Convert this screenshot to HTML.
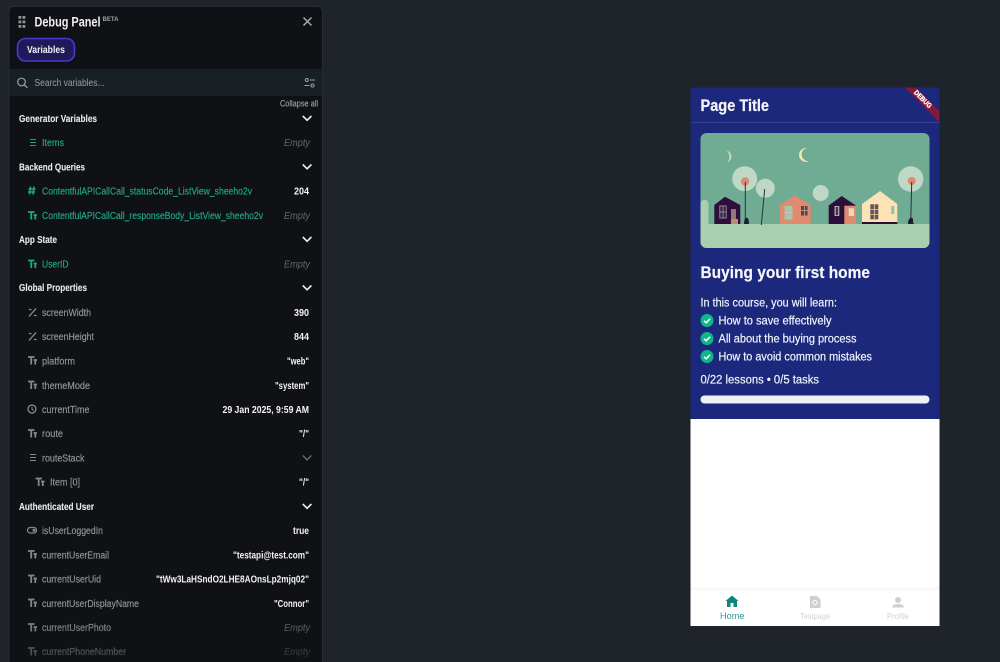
<!DOCTYPE html>
<html lang="en"><head><meta charset="utf-8"><title>Debug Panel</title>
<style>
html,body{margin:0;padding:0;background:#1e2429;width:1000px;height:662px;overflow:hidden}
svg{display:block;filter:blur(.3px)}
text{font-family:"Liberation Sans",sans-serif;dominant-baseline:alphabetic}
.s{font-size:10px;font-weight:700;fill:#e6e8ea;stroke:#e6e8ea;stroke-width:.1px}
.t{font-size:10px;fill:#22a889;stroke:#22a889;stroke-width:.15px}
.g{font-size:10px;fill:#92979b;stroke:#92979b;stroke-width:.15px}
.v{font-size:10px;font-weight:700;fill:#f2f2f2}
.e{font-size:10px;font-style:italic;fill:#5e6266;stroke:#5e6266;stroke-width:.1px}
.b{font-size:11.5px;fill:#f0f2fa;stroke:#f0f2fa;stroke-width:.2px}
</style></head><body>
<svg width="1000" height="662" viewBox="0 0 1000 662" xmlns="http://www.w3.org/2000/svg">
<rect width="1000" height="662" fill="#1e2429"/>
<!-- panel -->
<rect x="9" y="6.500" width="313.500" height="670" rx="5" fill="#0f1114" stroke="#262c31" stroke-width="1"/>
<g fill="#8f9499"><rect x="18.500" y="16" width="2.800" height="2.800"/><rect x="22.500" y="16" width="2.800" height="2.800"/><rect x="18.500" y="20.500" width="2.800" height="2.800"/><rect x="22.500" y="20.500" width="2.800" height="2.800"/><rect x="18.500" y="25" width="2.800" height="2.800"/><rect x="22.500" y="25" width="2.800" height="2.800"/></g>
<text x="34.500" y="26.500" font-size="13.500" font-weight="700" fill="#f1f1f1" textLength="66" lengthAdjust="spacingAndGlyphs">Debug Panel</text>
<text x="102.500" y="21" font-size="6" font-weight="700" fill="#9ea2a6" textLength="16" lengthAdjust="spacingAndGlyphs">BETA</text>
<path d="M303.500 17.500l8 8M311.500 17.500l-8 8" stroke="#a6aaae" stroke-width="1.500" fill="none"/>
<rect x="17.500" y="38.500" width="57" height="22.500" rx="8" fill="#1f1a58" stroke="#4a38d0" stroke-width="1.600"/>
<text x="27" y="52.800" font-size="10" font-weight="700" fill="#f2f2f8" textLength="38" lengthAdjust="spacingAndGlyphs">Variables</text>
<rect x="9.500" y="69" width="312.500" height="27" fill="#192025"/>
<circle cx="21.500" cy="82" r="3.800" fill="none" stroke="#9ca1a5" stroke-width="1.200"/><path d="M24.300 84.800l3 3" stroke="#9ca1a5" stroke-width="1.300"/>
<text x="34.500" y="85.800" font-size="10" fill="#8f9498" stroke="#8f9498" stroke-width=".1" textLength="70" lengthAdjust="spacingAndGlyphs">Search variables...</text>
<g fill="none" stroke="#9ca1a5" stroke-width="1"><circle cx="306.800" cy="80" r="1.500"/><path d="M310 80h5"/><circle cx="312.500" cy="85.500" r="1.500"/><path d="M304.500 85.500h5"/></g>
<text x="280" y="106.300" font-size="9" fill="#a3a7ab" stroke="#a3a7ab" stroke-width=".1" textLength="38" lengthAdjust="spacingAndGlyphs">Collapse all</text>

<!-- sections -->
<text class="s" x="19" y="121.800" textLength="78" lengthAdjust="spacingAndGlyphs">Generator Variables</text>
<text class="s" x="19" y="170.300" textLength="66" lengthAdjust="spacingAndGlyphs">Backend Queries</text>
<text class="s" x="19" y="242.800" textLength="38" lengthAdjust="spacingAndGlyphs">App State</text>
<text class="s" x="19" y="290.800" textLength="68" lengthAdjust="spacingAndGlyphs">Global Properties</text>
<text class="s" x="19" y="509.800" textLength="75" lengthAdjust="spacingAndGlyphs">Authenticated User</text>
<g fill="none" stroke="#f0f0f0" stroke-width="1.600">
<path d="M302.800 116l4.300 4.300 4.300-4.300"/><path d="M302.800 164.500l4.300 4.300 4.300-4.300"/><path d="M302.800 237l4.300 4.300 4.300-4.300"/><path d="M302.800 285.500l4.300 4.300 4.300-4.300"/><path d="M302.800 504l4.300 4.300 4.300-4.300"/>
</g>
<path d="M302.800 455.500l4.300 4.300 4.300-4.300" fill="none" stroke="#6d7175" stroke-width="1.300"/>

<!-- teal rows -->
<path d="M30 139.500h6M30 142.500h6M30 145.500h6" stroke="#1f9f82" stroke-width="1.100"/>
<text class="t" x="42" y="145.800" textLength="22" lengthAdjust="spacingAndGlyphs">Items</text>
<text class="e" x="284" y="146" textLength="26" lengthAdjust="spacingAndGlyphs">Empty</text>
<path d="M30.500 186.500l-1 8M34 186.500l-1 8M28.500 189h7M28 192h7" stroke="#1fa585" stroke-width="1.600" fill="none"/>
<text class="t" x="42" y="194.300" textLength="210" lengthAdjust="spacingAndGlyphs">ContentfulAPICallCall_statusCode_ListView_sheeho2v</text>
<text class="v" x="294" y="194.500" textLength="15" lengthAdjust="spacingAndGlyphs">204</text>
<path d="M28 212h6.500M31.200 212v7.500M33.500 215h3.500M35.300 215v4.500" stroke="#1fa585" stroke-width="1.800" fill="none"/>
<text class="t" x="42" y="218.800" textLength="221" lengthAdjust="spacingAndGlyphs">ContentfulAPICallCall_responseBody_ListView_sheeho2v</text>
<text class="e" x="284" y="219" textLength="26" lengthAdjust="spacingAndGlyphs">Empty</text>
<path d="M28 260.500h6.500M31.200 260.500v7.500M33.500 263.500h3.500M35.300 263.500v4.500" stroke="#1fa585" stroke-width="1.800" fill="none"/>
<text class="t" x="42" y="267.300" textLength="26.500" lengthAdjust="spacingAndGlyphs">UserID</text>
<text class="e" x="284" y="267.500" textLength="26" lengthAdjust="spacingAndGlyphs">Empty</text>

<!-- global -->
<g fill="none" stroke="#8e9296" stroke-width="1.300">
<path d="M29 316.500l7-8"/><path d="M29 340.500l7-8"/>
<path d="M29 309.500h2.500M34 315.500h2.500M29 333.500h2.500M34 339.500h2.500"/>
</g>
<g fill="none" stroke="#85898d" stroke-width="1.800">
<path d="M28 357h6.500M31.200 357v7.500M33.500 360h3.500M35.300 360v4.500"/>
<path d="M28 381.500h6.500M31.200 381.500v7.500M33.500 384.500h3.500M35.300 384.500v4.500"/>
<path d="M28 430h6.500M31.200 430v7.500M33.500 433h3.500M35.300 433v4.500"/>
<path d="M35.500 478.500h6.500M38.700 478.500v7.500M41 481.500h3.500M42.800 481.500v4.500"/>
<path d="M28 551h6.500M31.200 551v7.500M33.500 554h3.500M35.300 554v4.500"/>
<path d="M28 575.500h6.500M31.200 575.500v7.500M33.500 578.500h3.500M35.300 578.500v4.500"/>
<path d="M28 599.500h6.500M31.200 599.500v7.500M33.500 602.500h3.500M35.300 602.500v4.500"/>
<path d="M28 624h6.500M31.200 624v7.500M33.500 627h3.500M35.300 627v4.500"/>
<path d="M28 648h6.500M31.200 648v7.500M33.500 651h3.500M35.300 651v4.500"/>
</g>
<circle cx="32" cy="409" r="4" fill="none" stroke="#8e9296" stroke-width="1.200"/><path d="M32 406.800v2.500l1.800 1" fill="none" stroke="#8e9296" stroke-width=".9"/>
<path d="M30 454.500h6M30 457.500h6M30 460.500h6" stroke="#85898d" stroke-width="1"/>
<rect x="27.500" y="527.500" width="9" height="5.500" rx="2.700" fill="none" stroke="#85898d" stroke-width="1.200"/><circle cx="34" cy="530.200" r="1.500" fill="#85898d"/>

<text class="g" x="42" y="315.800" textLength="49" lengthAdjust="spacingAndGlyphs">screenWidth</text>
<text class="v" x="294" y="315.800" textLength="15" lengthAdjust="spacingAndGlyphs">390</text>
<text class="g" x="42" y="339.800" textLength="52" lengthAdjust="spacingAndGlyphs">screenHeight</text>
<text class="v" x="294" y="340.200" textLength="15" lengthAdjust="spacingAndGlyphs">844</text>
<text class="g" x="42" y="364.300" textLength="33" lengthAdjust="spacingAndGlyphs">platform</text>
<text class="v" x="287" y="364.300" textLength="22" lengthAdjust="spacingAndGlyphs">"web"</text>
<text class="g" x="42" y="388.800" textLength="48" lengthAdjust="spacingAndGlyphs">themeMode</text>
<text class="v" x="275" y="388.800" textLength="34" lengthAdjust="spacingAndGlyphs">"system"</text>
<text class="g" x="42" y="412.800" textLength="47.500" lengthAdjust="spacingAndGlyphs">currentTime</text>
<text class="v" x="222.500" y="412.800" textLength="86.500" lengthAdjust="spacingAndGlyphs">29 Jan 2025, 9:59 AM</text>
<text class="g" x="42" y="436.800" textLength="21" lengthAdjust="spacingAndGlyphs">route</text>
<text class="v" x="299" y="437" textLength="10" lengthAdjust="spacingAndGlyphs">"/"</text>
<text class="g" x="42" y="461.300" textLength="42.500" lengthAdjust="spacingAndGlyphs">routeStack</text>
<text class="g" x="50" y="485.300" textLength="30" lengthAdjust="spacingAndGlyphs">Item [0]</text>
<text class="v" x="299" y="485.300" textLength="10" lengthAdjust="spacingAndGlyphs">"/"</text>
<text class="g" x="42" y="533.800" textLength="61" lengthAdjust="spacingAndGlyphs">isUserLoggedIn</text>
<text class="v" x="293" y="534" textLength="16" lengthAdjust="spacingAndGlyphs">true</text>
<text class="g" x="42" y="558.300" textLength="67" lengthAdjust="spacingAndGlyphs">currentUserEmail</text>
<text class="v" x="233" y="558.300" textLength="76" lengthAdjust="spacingAndGlyphs">"testapi@test.com"</text>
<text class="g" x="42" y="582.300" textLength="59" lengthAdjust="spacingAndGlyphs">currentUserUid</text>
<text class="v" x="156" y="582.300" textLength="153" lengthAdjust="spacingAndGlyphs">"tWw3LaHSndO2LHE8AOnsLp2mjq02"</text>
<text class="g" x="42" y="606.800" textLength="97" lengthAdjust="spacingAndGlyphs">currentUserDisplayName</text>
<text class="v" x="274" y="606.800" textLength="35" lengthAdjust="spacingAndGlyphs">"Connor"</text>
<text class="g" x="42" y="630.800" textLength="69" lengthAdjust="spacingAndGlyphs">currentUserPhoto</text>
<text class="e" x="284" y="631" textLength="26" lengthAdjust="spacingAndGlyphs">Empty</text>
<text class="g" x="42" y="654.800" textLength="84" lengthAdjust="spacingAndGlyphs">currentPhoneNumber</text>
<text class="e" x="284" y="655" textLength="26" lengthAdjust="spacingAndGlyphs">Empty</text>
<linearGradient id="f" x1="0" y1="0" x2="0" y2="1"><stop offset="0" stop-color="#0f1114" stop-opacity="0"/><stop offset="1" stop-color="#0f1114" stop-opacity=".65"/></linearGradient>
<rect x="10" y="620" width="312" height="42" fill="url(#f)"/>

<!-- phone -->
<rect x="690.500" y="87.500" width="249" height="538.500" fill="#fff"/>
<rect x="690.500" y="87.500" width="249" height="331.500" fill="#1c287c"/>
<rect x="690.500" y="122" width="249" height="1" fill="#35408c"/>
<polygon points="905,87.500 916,87.500 939.500,111 939.500,122.500" fill="#7d1a3e"/>
<text x="0" y="0" transform="translate(913.500,93) rotate(45)" font-size="7" font-weight="700" fill="#fff" stroke="#fff" stroke-width=".3" textLength="22" lengthAdjust="spacingAndGlyphs">DEBUG</text>
<text x="700.500" y="110.800" font-size="16.500" font-weight="700" fill="#f4f5fb" stroke="#f4f5fb" stroke-width=".2" textLength="68.500" lengthAdjust="spacingAndGlyphs">Page Title</text>

<!-- image -->
<clipPath id="c"><rect x="700.500" y="133" width="229" height="115" rx="6"/></clipPath>
<g clip-path="url(#c)">
<rect x="700" y="133" width="230" height="115" fill="#6fac93"/>
<path d="M700.500 224v-20q0-4 4-4t4 4v20z" fill="#a9cfb0"/>
<rect x="700" y="224" width="230" height="24" fill="#aacfae"/>
<!-- moons -->
<path d="M726.500 150.500A6.200 6.200 0 0 1 727 162.500A8 8 0 0 0 726.500 150.500z" fill="#cfdcb4"/>
<path d="M807 148A7 7 0 1 0 809.500 161A6.500 6.500 0 0 1 807 148z" fill="#f5e6b4"/>
<!-- trees -->
<circle cx="744.700" cy="178.700" r="12.500" fill="#bfd8c6"/>
<circle cx="765.300" cy="188.300" r="9.500" fill="#bfd8c6"/>
<circle cx="820.700" cy="193" r="8" fill="#bfd8c6"/>
<circle cx="910.700" cy="179" r="12.700" fill="#bfd8c6"/>
<circle cx="745" cy="181.500" r="4.200" fill="#dd8a72"/>
<circle cx="911.700" cy="181" r="4" fill="#dd8a72"/>
<path d="M745.300 182v42M764.700 189l-3.400 36M911.700 182l-1 41" stroke="#1f3440" stroke-width="1" fill="none"/>
<path d="M744 224q0-5 2-6t2.500 2 .5 4z" fill="#1a1f35"/>
<path d="M908 224q0-5 2.500-6t2.500 2 1 4z" fill="#1a1f35"/>
<!-- house 1 -->
<polygon points="714.300,224 714.300,205 725,196.700 740.300,205 740.300,224" fill="#2e0f3b"/>
<rect x="719.300" y="205.500" width="7.400" height="13" fill="#8a8c90"/><rect x="720.300" y="206.500" width="2.300" height="5" fill="#3c2048"/><rect x="723.500" y="206.500" width="2.300" height="5" fill="#3c2048"/><rect x="720.300" y="212.500" width="2.300" height="5" fill="#3c2048"/><rect x="723.500" y="212.500" width="2.300" height="5" fill="#3c2048"/>
<rect x="731" y="209" width="5" height="10" fill="#8f7a78"/><rect x="731" y="219" width="7" height="5" fill="#c08a74"/>
<!-- house 2 -->
<polygon points="780,224 780,205 795,195.300 810.700,205 810.700,224" fill="#e08a70"/>
<rect x="784.500" y="206" width="8" height="13.500" fill="#9fc8ae"/><rect x="784.500" y="212" width="8" height="1" fill="#e8b8a0"/>
<rect x="801" y="206" width="6.500" height="9.500" fill="#5a4050"/><rect x="804" y="206" width=".8" height="9.500" fill="#c9a590"/><rect x="801" y="210" width="6.500" height=".8" fill="#c9a590"/>
<!-- house 3 -->
<polygon points="828.700,224 828.700,205.500 841.700,196 856,205.500 856,224" fill="#2e0f3b"/>
<rect x="844.300" y="205.700" width="11.700" height="18.300" fill="#e08a70"/>
<rect x="834.500" y="206" width="4.800" height="10" fill="#a8b0a4"/><rect x="835.800" y="207" width="2.200" height="8" fill="#4a3050"/>
<rect x="848.700" y="208.300" width="5.300" height="7.700" fill="#ecd6bc"/>
<!-- house 4 -->
<polygon points="862,222 862,204 880,191 897.300,204 897.300,222" fill="#fbe3b5"/>
<rect x="862" y="222" width="35.300" height="2" fill="#26102f"/>
<rect x="870.300" y="204.300" width="8" height="15" fill="#6a5258"/>
<path d="M870.300 209.300h8M870.300 214.300h8M874.300 204.300v15" stroke="#fbe3b5" stroke-width=".7"/>
<rect x="891.300" y="206" width="3" height="8" fill="#8fc2a2"/>
</g>

<text x="700.500" y="277.800" font-size="16.500" font-weight="700" fill="#f6f7fc" stroke="#f6f7fc" stroke-width=".2" textLength="169.500" lengthAdjust="spacingAndGlyphs">Buying your first home</text>
<text class="b" x="700.500" y="306.500" textLength="136.500" lengthAdjust="spacingAndGlyphs">In this course, you will learn:</text>
<g fill="#12b58a"><circle cx="707" cy="320.500" r="6.500"/><circle cx="707" cy="338.500" r="6.500"/><circle cx="707" cy="356.500" r="6.500"/></g>
<g fill="none" stroke="#fff" stroke-width="1.500"><path d="M704 320.800l2.200 2 3.800-4"/><path d="M704 338.800l2.200 2 3.800-4"/><path d="M704 356.800l2.200 2 3.800-4"/></g>
<text class="b" x="718.500" y="324.500" textLength="113" lengthAdjust="spacingAndGlyphs">How to save effectively</text>
<text class="b" x="718.500" y="342.500" textLength="138" lengthAdjust="spacingAndGlyphs">All about the buying process</text>
<text class="b" x="718.500" y="360.500" textLength="153.500" lengthAdjust="spacingAndGlyphs">How to avoid common mistakes</text>
<text class="b" x="700.500" y="383.500" textLength="118.500" lengthAdjust="spacingAndGlyphs">0/22 lessons • 0/5 tasks</text>
<rect x="700.500" y="395.500" width="229" height="8" rx="4" fill="#f0f1f7"/>

<!-- nav -->
<rect x="690.500" y="587.500" width="249" height="2.500" fill="#f8f8f8"/>
<path d="M732 595.500l6.500 5.500h-1.500v6h-3.500v-4h-3v4H727v-6h-1.500z" fill="#11857a"/>
<text x="720" y="619" font-size="9" fill="#2e9b90" textLength="24.500" lengthAdjust="spacingAndGlyphs">Home</text>
<path d="M810 596h7l3.500 3.500V608H810z" fill="#cfcfcf"/><circle cx="815" cy="602.500" r="2.200" fill="none" stroke="#fff" stroke-width="1"/>
<text x="800" y="619" font-size="8.500" fill="#d2d2d2" textLength="30" lengthAdjust="spacingAndGlyphs">Testpage</text>
<circle cx="898" cy="600" r="3" fill="#cfcfcf"/><path d="M892 607.500q0-3.500 6-3.500t6 3.500z" fill="#cfcfcf"/>
<text x="887" y="619" font-size="8.500" fill="#d2d2d2" textLength="22" lengthAdjust="spacingAndGlyphs">Profile</text>
</svg>
</body></html>
